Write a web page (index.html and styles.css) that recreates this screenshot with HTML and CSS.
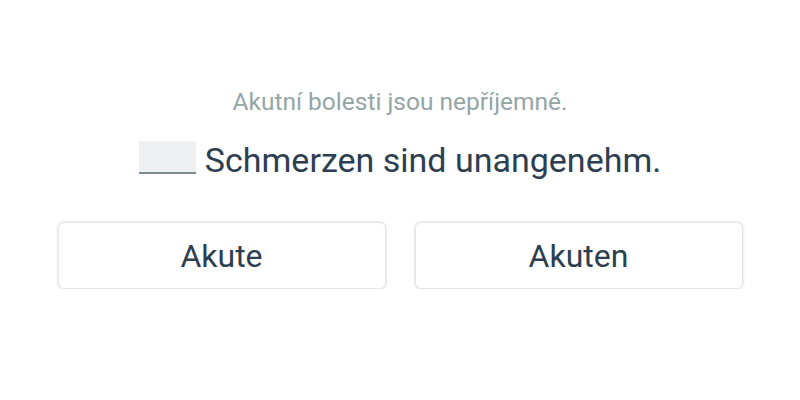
FILE: index.html
```html
<!DOCTYPE html>
<html lang="cs">
<head>
    <meta charset="UTF-8">
    <meta name="viewport" content="width=device-width, initial-scale=1.0">
    <title>Doplň slovo</title>
    <link rel="stylesheet" href="styles.css">
</head>
<body>
    <div class="exercise">
        <div class="hint">Akutní bolesti jsou nepříjemné.</div>
        <div class="sentence">
            <span class="blank"></span>
            <span>Schmerzen sind unangenehm.</span>
        </div>
        <div class="options">
            <button class="option">Akute</button>
            <button class="option">Akuten</button>
        </div>
    </div>
</body>
</html>
```

FILE: styles.css
```css
body {
    margin: 0;
    padding: 0;
    background-color: white;
    font-family: Roboto, "Noto Sans", sans-serif;
    color: #2c3e50;
}

.exercise {
    display: flex;
    flex-direction: column;
    align-items: center;
    padding-top: 88px;
}

.hint {
    font-size: 24.5px;
    line-height: 28px;
    color: #95a5a6;
}

.sentence {
    display: flex;
    align-items: center;
    gap: 9px;
    margin-top: 24px;
    font-size: 34px;
    line-height: 40px;
}

.blank {
    display: inline-block;
    width: 57px;
    height: 31px;
    margin-bottom: 5px;
    background-color: #eef0f1;
    border-bottom: 2px solid #7f8c8d;
}

.options {
    display: flex;
    gap: 29px;
    margin-top: 42px;
}

.option {
    width: 328px;
    height: 67px;
    background-color: white;
    border: 1px solid #e3e5e7;
    border-radius: 6px;
    box-shadow: 0 0 3px rgba(0, 0, 0, 0.16);
    font-family: Roboto, "Noto Sans", sans-serif;
    font-size: 32px;
    color: #2c3e50;
    cursor: pointer;
}
```
